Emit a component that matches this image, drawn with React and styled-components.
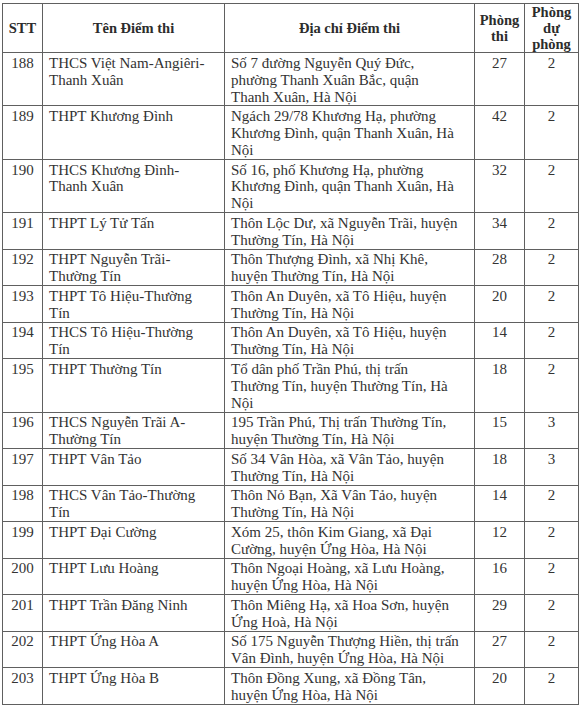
import React from "react";
import styled, { createGlobalStyle } from "styled-components";

const Global = createGlobalStyle`
  html, body { margin: 0; padding: 0; background: #ffffff; }
  body { font-family: "Liberation Serif", "Times New Roman", serif; color: #333333; }
`;

const Page = styled.div`
  padding: 3px 0 0 2px;
  width: 586px;
  box-sizing: border-box;
`;

const Table = styled.table`
  border-collapse: collapse;
  table-layout: fixed;
  width: 576px;
`;

const Col = styled.col`
  width: ${(p) => p.$w}px;
`;

const HeadCell = styled.th`
  border: 1px solid #606060;
  padding: 0 2px;
  height: 48px;
  font-size: 14.5px;
  line-height: 16px;
  font-weight: bold;
  text-align: center;
  vertical-align: middle;
  color: #2c2c2c;
`;

const Cell = styled.td`
  border: 1px solid #606060;
  padding: 1.7px ${(p) => (p.$center ? "0" : "6px")} 0;
  font-size: 15px;
  line-height: 16.9px;
  text-align: ${(p) => (p.$center ? "center" : "left")};
  vertical-align: top;
  color: #333333;
`;

const Line = styled.span`
  display: block;
  white-space: nowrap;
`;

const rows = [
  ["188", ["THCS Việt Nam-Angiêri-", "Thanh Xuân"], ["Số 7 đường Nguyễn Quý Đức,", "phường Thanh Xuân Bắc, quận", "Thanh Xuân, Hà Nội"], "27", "2"],
  ["189", ["THPT Khương Đình"], ["Ngách 29/78 Khương Hạ, phường", "Khương Đình, quận Thanh Xuân, Hà", "Nội"], "42", "2"],
  ["190", ["THCS Khương Đình-", "Thanh Xuân"], ["Số 16, phố Khương Hạ, phường", "Khương Đình, quận Thanh Xuân, Hà", "Nội"], "32", "2"],
  ["191", ["THPT Lý Tử Tấn"], ["Thôn Lộc Dư, xã Nguyễn Trãi, huyện", "Thường Tín, Hà Nội"], "34", "2"],
  ["192", ["THPT Nguyễn Trãi-", "Thường Tín"], ["Thôn Thượng Đình, xã Nhị Khê,", "huyện Thường Tín, Hà Nội"], "28", "2"],
  ["193", ["THPT Tô Hiệu-Thường", "Tín"], ["Thôn An Duyên, xã Tô Hiệu, huyện", "Thường Tín, Hà Nội"], "20", "2"],
  ["194", ["THCS Tô Hiệu-Thường", "Tín"], ["Thôn An Duyên, xã Tô Hiệu, huyện", "Thường Tín, Hà Nội"], "14", "2"],
  ["195", ["THPT Thường Tín"], ["Tổ dân phố Trần Phú, thị trấn", "Thường Tín, huyện Thường Tín, Hà", "Nội"], "18", "2"],
  ["196", ["THCS Nguyễn Trãi A-", "Thường Tín"], ["195 Trần Phú, Thị trấn Thường Tín,", "huyện Thường Tín, Hà Nội"], "15", "3"],
  ["197", ["THPT Vân Tảo"], ["Số 34 Vân Hòa, xã Vân Tảo, huyện", "Thường Tín, Hà Nội"], "18", "3"],
  ["198", ["THCS Vân Tảo-Thường", "Tín"], ["Thôn Nỏ Bạn, Xã Vân Tảo, huyện", "Thường Tín, Hà Nội"], "14", "2"],
  ["199", ["THPT Đại Cường"], ["Xóm 25, thôn Kim Giang, xã Đại", "Cường, huyện Ứng Hòa, Hà Nội"], "12", "2"],
  ["200", ["THPT Lưu Hoàng"], ["Thôn Ngoại Hoàng, xã Lưu Hoàng,", "huyện Ứng Hòa, Hà Nội"], "16", "2"],
  ["201", ["THPT Trần Đăng Ninh"], ["Thôn Miêng Hạ, xã Hoa Sơn, huyện", "Ứng Hoà, Hà Nội"], "29", "2"],
  ["202", ["THPT Ứng Hòa A"], ["Số 175 Nguyễn Thượng Hiền, thị trấn", "Vân Đình, huyện Ứng Hòa, Hà Nội"], "27", "2"],
  ["203", ["THPT Ứng Hòa B"], ["Thôn Đồng Xung, xã Đồng Tân,", "huyện Ứng Hòa, Hà Nội"], "20", "2"],
];

const Lines = ({ items }) => items.map((t, i) => <Line key={i}>{t}</Line>);

export default function App() {
  return (
    <Page>
      <Global />
      <Table>
        <colgroup>
          <Col $w={40} />
          <Col $w={182} />
          <Col $w={250} />
          <Col $w={50} />
          <Col $w={54} />
        </colgroup>
        <thead>
          <tr>
            <HeadCell>STT</HeadCell>
            <HeadCell>Tên Điểm thi</HeadCell>
            <HeadCell>Địa chỉ Điểm thi</HeadCell>
            <HeadCell>
              <Lines items={["Phòng", "thi"]} />
            </HeadCell>
            <HeadCell>
              <Lines items={["Phòng", "dự", "phòng"]} />
            </HeadCell>
          </tr>
        </thead>
        <tbody>
          {rows.map(([stt, name, addr, thi, dp]) => (
            <tr key={stt}>
              <Cell $center>{stt}</Cell>
              <Cell>
                <Lines items={name} />
              </Cell>
              <Cell>
                <Lines items={addr} />
              </Cell>
              <Cell $center>{thi}</Cell>
              <Cell $center>{dp}</Cell>
            </tr>
          ))}
        </tbody>
      </Table>
    </Page>
  );
}
